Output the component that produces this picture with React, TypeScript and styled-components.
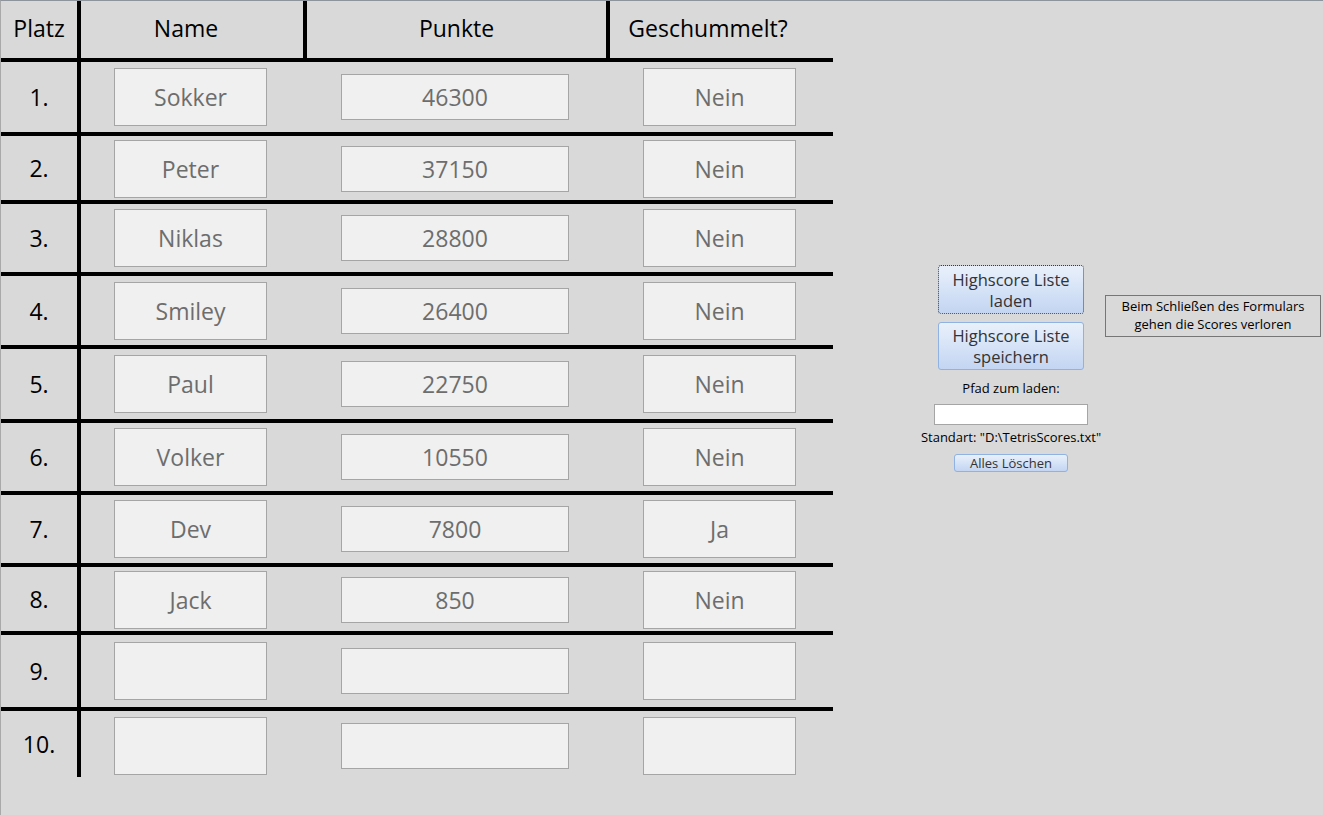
import React from "react";
import styled, { createGlobalStyle } from "styled-components";

const GlobalStyle = createGlobalStyle`
  html, body {
    margin: 0;
    padding: 0;
    background: #d9d9d9;
    font-family: "Open Sans", "Liberation Sans", sans-serif;
  }
  * { box-sizing: border-box; }
`;

const Page = styled.div`
  position: relative;
  width: 1323px;
  height: 815px;
  overflow: hidden;
  display: flex;
  align-items: flex-start;
  background: #d9d9d9;
  border-top: 1px solid #8d949c;
  border-left: 1px solid #a9a9a9;
`;

const TopAccent = styled.div`
  position: absolute;
  top: -1px;
  left: 72px;
  width: 115px;
  height: 1px;
  background: #f2c6c8;
`;

const Table = styled.div`
  width: 832px;
  display: flex;
  flex-direction: column;
`;

const COLS = "80px 226px 303px 223px";

const HeaderRow = styled.div`
  display: grid;
  grid-template-columns: ${COLS};
  height: 57px;
`;

const HeaderCell = styled.div<{ $divider?: boolean; $shift?: number }>`
  display: flex;
  align-items: center;
  justify-content: center;
  padding-right: ${(p) => p.$shift ?? 0}px;
  padding-bottom: 3px;
  border-right: ${(p) => (p.$divider ? "4px solid #000" : "none")};
  font-size: 23px;
  color: #000;
`;

const Separator = styled.div`
  height: 4px;
  width: 832px;
  background: #000;
`;

const BodyRow = styled.div<{ $h: number; $nudge: number }>`
  display: grid;
  grid-template-columns: ${COLS};
  height: ${(p) => p.$h}px;
  & > * + * {
    padding-top: ${(p) => p.$nudge}px;
  }
`;

const RankCell = styled.div`
  display: flex;
  align-items: center;
  justify-content: center;
  border-right: 4px solid #000;
  font-size: 23px;
  color: #000;
`;

const FieldCell = styled.div<{ $offset: number }>`
  display: flex;
  align-items: center;
  padding-left: ${(p) => p.$offset}px;
`;

const FieldBox = styled.div<{ $w: number; $h: number }>`
  width: ${(p) => p.$w}px;
  height: ${(p) => p.$h}px;
  background: #f0f0f0;
  border: 1px solid #a5a5a5;
  display: flex;
  align-items: center;
  justify-content: center;
  font-size: 23px;
  color: #6d6d6d;
`;

const SidePanel = styled.div`
  display: flex;
  align-items: flex-start;
  margin-left: 84px;
  padding-top: 264px;
`;

const ControlColumn = styled.div`
  width: 188px;
  display: flex;
  flex-direction: column;
  align-items: center;
`;

const BlueButton = styled.button<{ $w: number; $h: number; $focused?: boolean; $size: number; $mt?: number }>`
  width: ${(p) => p.$w}px;
  height: ${(p) => p.$h}px;
  padding: 0 4px;
  margin: ${(p) => p.$mt ?? 0}px 0 0 0;
  border: 1px ${(p) => (p.$focused ? "dotted #3a3a3a" : "solid #8fb2e2")};
  border-radius: 3px;
  background: linear-gradient(to bottom, #e9f0fb 0%, #d6e3f7 50%, #c3d5f2 100%);
  font-family: "Open Sans", "Liberation Sans", sans-serif;
  font-size: ${(p) => p.$size}px;
  line-height: ${(p) => (p.$size > 14 ? 21 : 16)}px;
  color: #333;
  text-align: center;
`;

const SmallText = styled.div<{ $mt: number }>`
  margin-top: ${(p) => p.$mt}px;
  font-size: 13px;
  line-height: 16px;
  color: #000;
  white-space: nowrap;
`;

const PathInput = styled.input`
  margin-top: 8px;
  width: 154px;
  height: 21px;
  border: 1px solid #a5a5a5;
  background: #fff;
  padding: 0 3px;
  font-family: "Open Sans", "Liberation Sans", sans-serif;
  font-size: 13px;
  outline: none;
`;

const InfoBox = styled.div`
  margin-top: 30px;
  width: 216px;
  height: 42px;
  border: 1px solid #767676;
  display: flex;
  flex-direction: column;
  align-items: center;
  justify-content: center;
  padding-bottom: 3px;
  font-size: 13px;
  line-height: 18px;
  color: #000;
  text-align: center;
`;

type Entry = { name: string; points: string; cheated: string; h: number; nudge: number };

const entries: Entry[] = [
  { name: "Sokker", points: "46300", cheated: "Nein", h: 70, nudge: 0 },
  { name: "Peter", points: "37150", cheated: "Nein", h: 64, nudge: 1 },
  { name: "Niklas", points: "28800", cheated: "Nein", h: 68, nudge: 0 },
  { name: "Smiley", points: "26400", cheated: "Nein", h: 69, nudge: 0 },
  { name: "Paul", points: "22750", cheated: "Nein", h: 70, nudge: 0 },
  { name: "Volker", points: "10550", cheated: "Nein", h: 68, nudge: 0 },
  { name: "Dev", points: "7800", cheated: "Ja", h: 68, nudge: 0 },
  { name: "Jack", points: "850", cheated: "Nein", h: 64, nudge: 1 },
  { name: "", points: "", cheated: "", h: 72, nudge: 0 },
  { name: "", points: "", cheated: "", h: 66, nudge: 4 },
];

export default function App() {
  return (
    <>
      <GlobalStyle />
      <Page>
        <TopAccent />
        <Table>
          <HeaderRow>
            <HeaderCell $divider>Platz</HeaderCell>
            <HeaderCell $divider $shift={12}>Name</HeaderCell>
            <HeaderCell $divider>Punkte</HeaderCell>
            <HeaderCell $shift={27}>Geschummelt?</HeaderCell>
          </HeaderRow>
          {entries.map((e, i) => (
            <React.Fragment key={i}>
              <Separator />
              <BodyRow $h={e.h} $nudge={e.nudge}>
                <RankCell>{i + 1}.</RankCell>
                <FieldCell $offset={33}>
                  <FieldBox $w={153} $h={58}>{e.name}</FieldBox>
                </FieldCell>
                <FieldCell $offset={34}>
                  <FieldBox $w={228} $h={46}>{e.points}</FieldBox>
                </FieldCell>
                <FieldCell $offset={33}>
                  <FieldBox $w={153} $h={58}>{e.cheated}</FieldBox>
                </FieldCell>
              </BodyRow>
            </React.Fragment>
          ))}
        </Table>
        <SidePanel>
          <ControlColumn>
            <BlueButton $w={146} $h={49} $focused $size={16.5}>
              Highscore Liste
              <br />
              laden
            </BlueButton>
            <BlueButton $w={146} $h={48} $size={16.5} $mt={8}>
              Highscore Liste
              <br />
              speichern
            </BlueButton>
            <SmallText $mt={10}>Pfad zum laden:</SmallText>
            <PathInput type="text" defaultValue="" />
            <SmallText $mt={4}>Standart: "D:\TetrisScores.txt"</SmallText>
            <BlueButton $w={114} $h={18} $size={13} $mt={9}>
              Alles Löschen
            </BlueButton>
          </ControlColumn>
          <InfoBox>
            <span>Beim Schließen des Formulars</span>
            <span>gehen die Scores verloren</span>
          </InfoBox>
        </SidePanel>
      </Page>
    </>
  );
}
